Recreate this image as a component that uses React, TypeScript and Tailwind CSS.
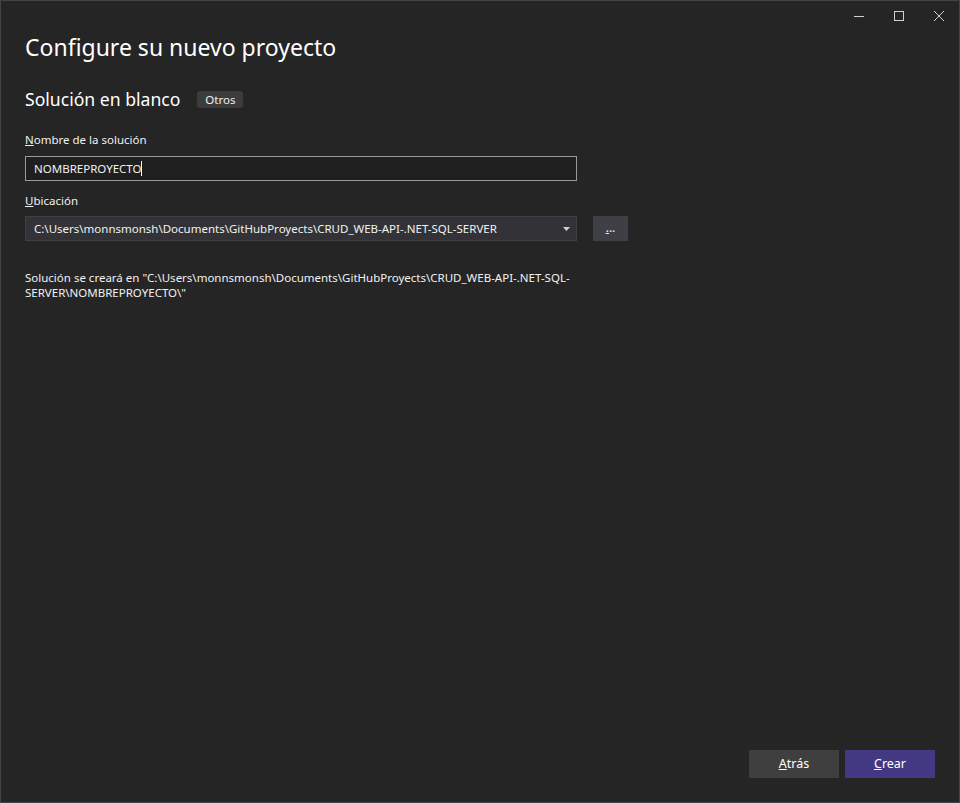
import React from "react";

export default function App() {
  const font = { fontFamily: '"Segoe UI", "Noto Sans", sans-serif' };
  return (
    <div
      className="w-[960px] h-[803px] bg-[#252526] border border-[#434346] text-[#f1f1f1] flex flex-col relative"
      style={font}
    >
      {/* window controls */}
      <div className="absolute top-0 right-0 flex text-[#d0d0d0]">
        <div className="w-[40px] h-[29px] flex items-center justify-center">
          <svg width="10" height="10" viewBox="0 0 10 10"><path d="M0 5.5h10" stroke="currentColor" strokeWidth="1" /></svg>
        </div>
        <div className="w-[40px] h-[29px] flex items-center justify-center">
          <svg width="10" height="10" viewBox="0 0 10 10"><rect x="0.5" y="0.5" width="9" height="9" fill="none" stroke="currentColor" strokeWidth="1" /></svg>
        </div>
        <div className="w-[40px] h-[29px] flex items-center justify-center">
          <svg width="10" height="10" viewBox="0 0 10 10"><path d="M0 0L10 10M10 0L0 10" stroke="currentColor" strokeWidth="1" /></svg>
        </div>
      </div>

      <div className="flex-1 flex flex-col pl-[24px] pt-[30px]">
        <h1 className="text-[23px] leading-[32px] text-white">Configure su nuevo proyecto</h1>

        <div className="flex items-center mt-[24px] h-[24px]">
          <span className="text-[17.6px] leading-[24px] text-white">Solución en blanco</span>
          <span className="ml-[17px] bg-[#3c3c3c] rounded-[3px] text-[11.5px] leading-[17px] px-[8px] text-[#f1f1f1]">Otros</span>
        </div>

        <label className="mt-[21px] text-[11.5px] leading-[16px] text-[#f1f1f1]">
          <span className="underline">N</span>ombre de la solución
        </label>
        <div className="mt-[8px] w-[552px] h-[25px] border border-[#9a9a9a] bg-[#1f1f1f] flex items-center pl-[8px] text-[11.5px]">
          <span>NOMBREPROYECTO</span>
          <span className="w-px h-[15px] bg-white" />
        </div>

        <label className="mt-[12px] text-[11.5px] leading-[16px] text-[#f1f1f1]">
          <span className="underline">U</span>bicación
        </label>
        <div className="mt-[7px] flex items-center">
          <div className="w-[552px] h-[25px] border border-[#3f3f46] bg-[#333337] flex items-center pl-[8px] pr-[6px] text-[11.5px]">
            <span className="flex-1">C:\Users\monnsmonsh\Documents\GitHubProyects\CRUD_WEB-API-.NET-SQL-SERVER</span>
            <svg width="7" height="4" viewBox="0 0 7 4"><path d="M0 0h7L3.5 4z" fill="#d0d0d0" /></svg>
          </div>
          <div className="ml-[16px] w-[35px] h-[25px] bg-[#3f3f46] flex items-center justify-center text-[12px] leading-none pb-[2px]">
            <span><span className="underline">.</span>..</span>
          </div>
        </div>

        <p className="mt-[29px] text-[11.5px] leading-[15px] text-[#f1f1f1] whitespace-nowrap">
          Solución se creará en "C:\Users\monnsmonsh\Documents\GitHubProyects\CRUD_WEB-API-.NET-SQL-
          <br />
          SERVER\NOMBREPROYECTO\"
        </p>
      </div>

      <div className="flex justify-end gap-[6px] pr-[24px] pb-[24px]">
        <button className="w-[90px] h-[28px] bg-[#3f3f40] text-[12.5px] text-white">
          <span className="underline">A</span>trás
        </button>
        <button className="w-[90px] h-[28px] bg-[#433882] text-[12.5px] text-white">
          <span className="underline">C</span>rear
        </button>
      </div>
    </div>
  );
}
